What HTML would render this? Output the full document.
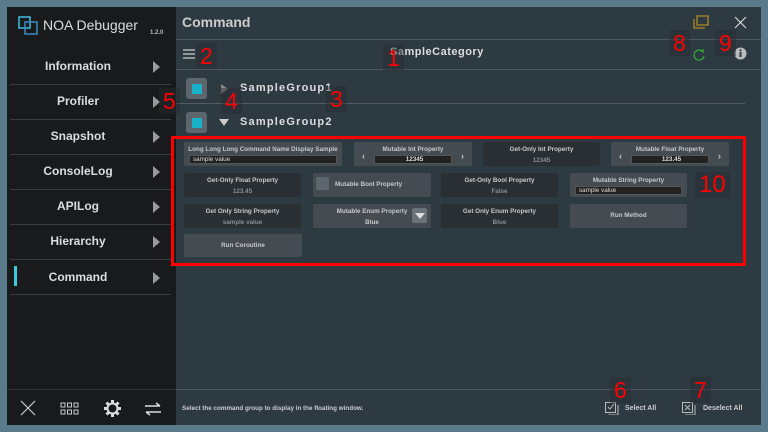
<!DOCTYPE html><html><head><style>
*{margin:0;padding:0;box-sizing:border-box}
body{width:768px;height:432px;background:#587a8b;font-family:"Liberation Sans",sans-serif;position:relative;overflow:hidden}
.a{position:absolute}
#side{left:7px;top:7px;width:169px;height:418px;background:#181a1c}
#main{left:176px;top:7px;width:585px;height:418px;background:#2e3a42}
.item{position:absolute;left:10px;width:156px;height:35px;color:#dcdcdc;font-weight:bold;font-size:12px;line-height:35px;text-align:center;padding-right:20px}
.item:after{content:"";position:absolute;right:6px;top:12px;border-left:7px solid #9a9a9a;border-top:6px solid transparent;border-bottom:6px solid transparent}
.div{position:absolute;left:10px;width:161px;height:1px;background:#3a3d40}
.hl{position:absolute;height:1px;background:#4d585f}
.num{position:absolute;color:#f00;font-size:23px;background:rgba(40,44,48,.45);line-height:26px;padding:0 4px}
.c{position:absolute;height:24px;border-radius:2px;color:#c8c8c8;font-size:6.3px;font-weight:bold;text-align:center;line-height:11px;padding-top:2px}
.e{background:#454c51}.g{background:#2a2f33}
.v{color:#8a8f93}
.in{position:absolute;background:#222;border:1px solid #555;color:#ddd;text-align:left;padding-left:3px;height:9px;line-height:8px}
</style></head><body>
<div id="side" class="a"></div>
<div id="main" class="a"></div>
<svg class="a" style="left:18px;top:16px" width="22" height="20"><rect x="1" y="1" width="11" height="11" fill="none" stroke="#3fc0e0" stroke-width="1.5"/><rect x="7" y="6" width="12" height="12" fill="none" stroke="#3a8ac0" stroke-width="1.5"/></svg>
<div class="a" style="left:43px;top:17px;color:#ddd;font-size:14px">NOA Debugger</div>
<div class="a" style="left:150px;top:30px;color:#bbb;font-size:6px;font-weight:bold">1.2.0</div>
<div class="item" style="top:49px">Information</div><div class="div" style="top:84px"></div>
<div class="item" style="top:84px">Profiler</div><div class="div" style="top:119px"></div>
<div class="item" style="top:119px">Snapshot</div><div class="div" style="top:154px"></div>
<div class="item" style="top:154px">ConsoleLog</div><div class="div" style="top:189px"></div>
<div class="item" style="top:189px">APILog</div><div class="div" style="top:224px"></div>
<div class="item" style="top:224px">Hierarchy</div><div class="div" style="top:259px"></div>
<div class="item" style="top:260px">Command</div><div class="div" style="top:294px"></div>
<div class="a" style="left:14px;top:266px;width:3px;height:20px;background:#3ac8e0"></div>
<div class="a" style="left:7px;top:389px;width:169px;height:1px;background:#333"></div>
<svg class="a" style="left:20px;top:400px" width="16" height="16" stroke="#ccc" stroke-width="1.2"><path d="M1 1L15 15M15 1L1 15"/></svg>
<svg class="a" style="left:60px;top:402px" width="20" height="14" fill="none" stroke="#ccc"><rect x="1" y="1" width="4" height="4"/><rect x="7.5" y="1" width="4" height="4"/><rect x="14" y="1" width="4" height="4"/><rect x="1" y="8" width="4" height="4"/><rect x="7.5" y="8" width="4" height="4"/><rect x="14" y="8" width="4" height="4"/></svg>
<svg class="a" style="left:103px;top:399px" width="19" height="19"><g stroke="#ddd" stroke-width="3"><path d="M9.5 1v17M1 9.5h17M3.5 3.5l12 12M15.5 3.5l-12 12"/></g><circle cx="9.5" cy="9.5" r="6" fill="#ddd"/><circle cx="9.5" cy="9.5" r="4" fill="#181a1c"/></svg>
<svg class="a" style="left:144px;top:402px" width="18" height="14" fill="none" stroke="#ddd" stroke-width="1.5"><path d="M1 4h15M12 1l4 3M17 10H2M6 13l-4-3"/></svg>
<div class="a" style="left:182px;top:14px;color:#ccc;font-size:14px;font-weight:bold">Command</div>
<svg class="a" style="left:693px;top:15px" width="16" height="14" fill="none" stroke="#b08a20" stroke-width="1.3"><rect x="4" y="1" width="11" height="9"/><path d="M1 4v9h11"/></svg>
<svg class="a" style="left:734px;top:16px" width="13" height="13" stroke="#ddd" stroke-width="1.1"><path d="M1 1L12 12M12 1L1 12"/></svg>
<div class="hl" style="left:176px;top:39px;width:585px"></div>
<svg class="a" style="left:183px;top:49px" width="12" height="10" stroke="#ccc" stroke-width="1.3"><path d="M0 1h12M0 5h12M0 9h12"/></svg>
<div class="a" style="left:390px;top:46px;color:#ddd;font-size:11px;font-weight:bold;letter-spacing:.5px">SampleCategory</div>
<svg class="a" style="left:693px;top:48px" width="13" height="13" fill="none" stroke="#30b030" stroke-width="1.2"><path d="M10 4A5 5 0 1 0 11 8"/><path d="M7 2l3 2 0-3" /></svg>
<svg class="a" style="left:734px;top:47px" width="13" height="13"><circle cx="6.5" cy="6.5" r="6" fill="#bbb"/><rect x="5.5" y="5" width="2" height="5" fill="#2e3a42"/><circle cx="6.5" cy="3.3" r="1.1" fill="#2e3a42"/></svg>
<div class="hl" style="left:176px;top:69px;width:585px"></div>
<div class="a" style="left:186px;top:78px;width:21px;height:21px;background:#5c666c;border-radius:3px"></div>
<div class="a" style="left:192px;top:84px;width:10px;height:10px;background:#1ab0c8"></div>
<div class="a" style="left:221px;top:84px;border-left:7px solid #888;border-top:5px solid transparent;border-bottom:5px solid transparent"></div>
<div class="a" style="left:240px;top:82px;color:#ddd;font-size:11px;font-weight:bold;letter-spacing:1.2px">SampleGroup1</div>
<div class="hl" style="left:176px;top:103px;width:569px;background:#555d62"></div>
<div class="a" style="left:186px;top:112px;width:21px;height:21px;background:#5c666c;border-radius:3px"></div>
<div class="a" style="left:192px;top:118px;width:10px;height:10px;background:#1ab0c8"></div>
<div class="a" style="left:219px;top:119px;border-top:7px solid #ccc;border-left:5px solid transparent;border-right:5px solid transparent"></div>
<div class="a" style="left:240px;top:116px;color:#ddd;font-size:11px;font-weight:bold;letter-spacing:1.2px">SampleGroup2</div>
<div class="a" style="left:171px;top:136px;width:575px;height:130px;border:3px solid #f00"></div>
<div class="c e" style="left:184px;top:142px;width:158px">Long Long Long Command Name Display Sample<div class="in" style="left:5px;top:13px;width:148px;font-weight:normal">sample value</div></div>
<div class="c e" style="left:354px;top:142px;width:118px">Mutable Int Property<div class="in" style="left:20px;top:13px;width:78px;text-align:center">12345</div><span class="a" style="left:8px;top:9px;font-size:9px">‹</span><span class="a" style="right:8px;top:9px;font-size:9px">›</span></div>
<div class="c g" style="left:483px;top:142px;width:117px">Get-Only Int Property<br><span class="v">12345</span></div>
<div class="c e" style="left:611px;top:142px;width:118px">Mutable Float Property<div class="in" style="left:20px;top:13px;width:78px;text-align:center">123.45</div><span class="a" style="left:8px;top:9px;font-size:9px">‹</span><span class="a" style="right:8px;top:9px;font-size:9px">›</span></div>
<div class="c g" style="left:184px;top:173px;width:117px">Get-Only Float Property<br><span class="v">123.45</span></div>
<div class="c e" style="left:313px;top:173px;width:118px;text-align:left;padding:6px 0 0 22px">Mutable Bool Property<div class="a" style="left:3px;top:4px;width:13px;height:13px;background:#5c666c;border-radius:2px"></div></div>
<div class="c g" style="left:441px;top:173px;width:117px">Get-Only Bool Property<br><span class="v">False</span></div>
<div class="c e" style="left:570px;top:173px;width:117px">Mutable String Property<div class="in" style="left:5px;top:13px;width:107px;font-weight:normal">sample value</div></div>
<div class="c g" style="left:184px;top:204px;width:117px">Get Only String Property<br><span class="v">sample value</span></div>
<div class="c e" style="left:313px;top:204px;width:118px">Mutable Enum Property<br>Blue<div class="a" style="left:99px;top:4px;width:15px;height:15px;background:#6a7278;border-radius:2px"><div style="margin:5px auto 0;width:0;border-top:6px solid #ddd;border-left:5px solid transparent;border-right:5px solid transparent"></div></div></div>
<div class="c g" style="left:441px;top:204px;width:117px">Get Only Enum Property<br><span class="v">Blue</span></div>
<div class="c e" style="left:570px;top:204px;width:117px;line-height:20px">Run Method</div>
<div class="c e" style="left:184px;top:234px;width:118px;height:23px;line-height:20px">Run Coroutine</div>
<div class="hl" style="left:176px;top:389px;width:585px"></div>
<div class="a" style="left:182px;top:405px;color:#ccc;font-size:6.3px;font-weight:bold">Select the command group to display in the floating window.</div>
<svg class="a" style="left:605px;top:402px" width="14" height="13" fill="none" stroke="#bbb"><rect x="0.5" y="0.5" width="10" height="10"/><path d="M3 5l2 2 4-5M13 3v10H3"/></svg>
<div class="a" style="left:625px;top:405px;color:#ccc;font-size:7px;font-weight:bold">Select All</div>
<svg class="a" style="left:682px;top:402px" width="14" height="13" fill="none" stroke="#bbb"><rect x="0.5" y="0.5" width="10" height="10"/><path d="M3 3l5 5M8 3l-5 5M13 3v10H3"/></svg>
<div class="a" style="left:703px;top:405px;color:#ccc;font-size:7px;font-weight:bold">Deselect All</div>
<div class="num" style="left:383px;top:45px">1</div>
<div class="num" style="left:196px;top:43px">2</div>
<div class="num" style="left:326px;top:86px">3</div>
<div class="num" style="left:221px;top:88px">4</div>
<div class="num" style="left:159px;top:88px">5</div>
<div class="num" style="left:610px;top:377px">6</div>
<div class="num" style="left:690px;top:377px">7</div>
<div class="num" style="left:669px;top:30px">8</div>
<div class="num" style="left:715px;top:30px">9</div>
<div class="num" style="left:695px;top:172px;font-size:24px">10</div>
</body></html>
